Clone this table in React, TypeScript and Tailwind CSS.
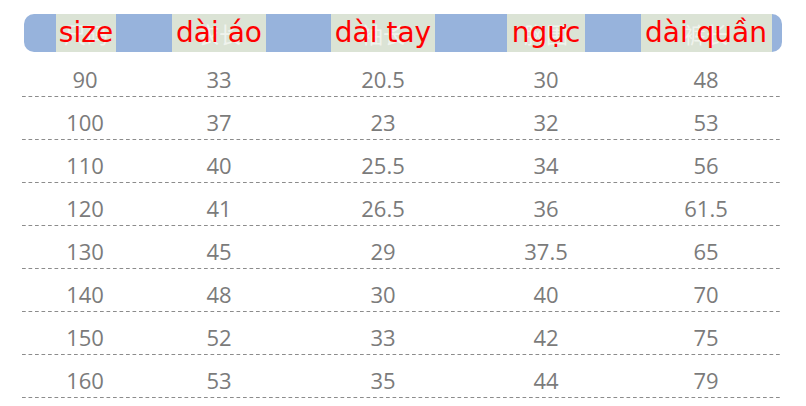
const headers = [
  { label: "size", ghost: "尺码", w: "w-[60px]" },
  { label: "dài áo", ghost: "衣长", w: "w-[94px]" },
  { label: "dài tay", ghost: "袖长", w: "w-[104px]" },
  { label: "ngực", ghost: "胸围", w: "w-[78px]" },
  { label: "dài quần", ghost: "裤长", w: "w-[131px]" },
];

const rows = [
  ["90", "33", "20.5", "30", "48"],
  ["100", "37", "23", "32", "53"],
  ["110", "40", "25.5", "34", "56"],
  ["120", "41", "26.5", "36", "61.5"],
  ["130", "45", "29", "37.5", "65"],
  ["140", "48", "30", "40", "70"],
  ["150", "52", "33", "42", "75"],
  ["160", "53", "35", "44", "79"],
];

const cols = "grid grid-cols-[126px_142px_186px_140px_166px]";

export default function App() {
  return (
    <div className="w-[806px] h-[406px] bg-white pt-[14px] overflow-hidden">
      {/* header bar */}
      <div className="ml-[24px] w-[758px] h-[38px] rounded-[10px] bg-[#97b3dc] grid grid-cols-[124px_142px_186px_140px_166px]">
        {headers.map((h, i) => (
          <div
            key={h.label}
            className={`flex justify-center ${i === 4 ? "pl-[14px]" : ""}`}
          >
            <div
              className={`relative ${h.w} h-[38px] bg-[#dbe3d5] flex items-center justify-center`}
            >
              <span className="absolute inset-0 flex items-center justify-center text-[22px] text-white/60 font-['Noto_Sans_CJK_SC',sans-serif]">
                {h.ghost}
              </span>
              <span className="relative whitespace-nowrap text-[28px] leading-[38px] text-[#ff0000] font-['DejaVu_Sans',sans-serif]">
                {h.label}
              </span>
            </div>
          </div>
        ))}
      </div>

      {/* rows */}
      <div className="ml-[22px] w-[760px] font-['Open_Sans',sans-serif] text-[22px] text-[#7b7b7b]">
        {rows.map((r, ri) => (
          <div
            key={r[0]}
            className={`flex flex-col justify-end ${ri === 0 ? "h-[45px]" : "h-[43px]"}`}
          >
            <div className={`${cols} leading-[30px] pb-[2px]`}>
              {r.map((v, i) => (
                <div
                  key={i}
                  className={`text-center ${i === 4 ? "pl-[14px]" : ""}`}
                >
                  {v}
                </div>
              ))}
            </div>
            <div className="h-px w-[758px] bg-[linear-gradient(to_right,#8c8c8c_4px,transparent_4px)] bg-[length:6.5px_1px] bg-repeat-x" />
          </div>
        ))}
      </div>
    </div>
  );
}
